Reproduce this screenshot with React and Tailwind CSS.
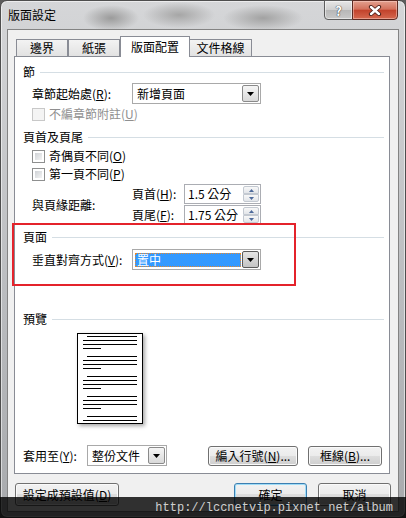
import React from "react";

function U({ c }) {
  return (
    <>
      (<span className="underline underline-offset-[1px]">{c}</span>)
    </>
  );
}

function Arrow({ dark }) {
  return (
    <div
      className={
        dark
          ? "w-[17px] flex items-center justify-center border border-[#5a5a5a] rounded-[2px] bg-[linear-gradient(#e4e4e4,#c4c4c4)]"
          : "w-[17px] flex items-center justify-center border border-[#8a8a8a] rounded-[2px] bg-[linear-gradient(#f5f5f5,#d9d9d9)]"
      }
    >
      <svg width="7" height="4" viewBox="0 0 7 4">
        <path d="M0 0h7L3.5 4z" fill="#000" />
      </svg>
    </div>
  );
}

function Select({ value, w, selected }) {
  return (
    <div className={`flex h-[21px] border border-[#a9a9a9] bg-white p-px ${w}`}>
      <div className="flex-1 flex items-center">
        {selected ? (
          <span className="flex-1 h-[14px] ml-px mr-px flex items-center pl-px bg-[#3399ff] text-white border border-dotted border-[#e8882c]">
            {value}
          </span>
        ) : (
          <span className="pl-[3px]">{value}</span>
        )}
      </div>
      <Arrow dark={selected} />
    </div>
  );
}

function SpinBtn({ up }) {
  return (
    <div
      className={
        up
          ? "h-[8px] flex items-center justify-center border border-[#c3c9d1] rounded-t-[2px] bg-[linear-gradient(#f8f8f8,#e2e5e9)]"
          : "h-[8px] flex items-center justify-center border border-[#c3c9d1] rounded-b-[2px] bg-[linear-gradient(#f8f8f8,#e2e5e9)]"
      }
    >
      <svg width="5" height="3" viewBox="0 0 5 3">
        {up ? <path d="M2.5 0L5 3H0z" fill="#4d6a9a" /> : <path d="M0 0h5L2.5 3z" fill="#4d6a9a" />}
      </svg>
    </div>
  );
}

function Spin({ value }) {
  return (
    <div className="flex h-[20px] w-[77px] border border-[#abadb3] bg-white items-center">
      <span className="flex-1 pl-[3px]">{value}</span>
      <div className="flex flex-col w-[16px] mr-px">
        <SpinBtn up />
        <SpinBtn />
      </div>
    </div>
  );
}

function Check({ label, disabled }) {
  return (
    <div className="flex items-center h-[14px] pl-[17px]">
      <div
        className={
          disabled
            ? "w-[13px] h-[13px] border border-[#c8c8c8] bg-[#f4f4f4]"
            : "w-[13px] h-[13px] border border-[#8e8f8f] bg-white p-[2px]"
        }
      >
        {!disabled && <div className="w-full h-full bg-[linear-gradient(135deg,#cfd2d6,#f4f4f4)]" />}
      </div>
      <span className={disabled ? "ml-[4px] text-[#8f8f8f]" : "ml-[4px]"}>{label}</span>
    </div>
  );
}

function Header({ children }) {
  return (
    <div className="flex items-center h-[16px] pl-[8px] pr-[5px]">
      <span>{children}</span>
      <div className="flex-1 h-px bg-[#d5dee4] ml-[5px]" />
    </div>
  );
}

function Btn({ children, w, def }) {
  return (
    <div
      className={
        def
          ? `flex items-center justify-center h-[23px] rounded-[3px] border border-[#3c7fb1] shadow-[inset_0_0_0_1px_#9fdcf7] bg-[linear-gradient(#f2f2f2_0%,#ebebeb_50%,#dddddd_50%,#cfcfcf_100%)] ${w}`
          : `flex items-center justify-center h-[23px] rounded-[3px] border border-[#707070] shadow-[inset_0_0_0_1px_#fafafa] bg-[linear-gradient(#f2f2f2_0%,#ebebeb_50%,#dddddd_50%,#cfcfcf_100%)] ${w}`
      }
    >
      {children}
    </div>
  );
}

function SmallBtn({ children, w }) {
  return (
    <div
      className={`flex items-center justify-center h-[20px] rounded-[3px] border border-[#707070] shadow-[inset_0_0_0_1px_#fafafa] bg-[linear-gradient(#f2f2f2_0%,#ebebeb_50%,#dddddd_50%,#cfcfcf_100%)] ${w}`}
    >
      {children}
    </div>
  );
}

function Preview() {
  const groups = [0, 20, 40, 60];
  return (
    <div className="w-[66px] h-[91px] border border-black bg-white shadow-[2px_2px_4px_rgba(0,0,0,0.35)]">
      <svg width="64" height="89" viewBox="0 0 64 89">
        {groups.map((g) => (
          <g key={g} fill="#000">
            <rect x="9" y={2 + g} width="50" height="1" />
            <rect x="5" y={6 + g} width="54" height="1" />
            <rect x="5" y={10 + g} width="54" height="1" />
            <rect x="5" y={14 + g} width="18" height="1" />
          </g>
        ))}
        <rect x="9" y="82" width="50" height="1" fill="#000" />
        <rect x="5" y="86" width="54" height="1" fill="#000" />
      </svg>
    </div>
  );
}

export default function App() {
  return (
    <div className="relative w-[406px] h-[518px] bg-[#5c5c5c] overflow-hidden font-['Noto_Sans_CJK_TC','Noto_Sans_CJK_SC',sans-serif] text-[12px] leading-[14px] text-black">
      <div className="flex flex-col w-[406px] h-[518px] rounded-[7px] border border-[#4e4e4e] shadow-[inset_0_0_0_1px_rgba(255,255,255,0.55)] bg-[radial-gradient(ellipse_28px_13px_at_110px_17px,#9b9b9b,transparent),radial-gradient(ellipse_36px_13px_at_178px_14px,#a6a6a6,transparent),radial-gradient(ellipse_40px_13px_at_262px_17px,#a2a2a2,transparent),linear-gradient(#d5d6d8,#b9bbbe_60%,#a8aaad)]">
        <div className="flex h-[28px] shrink-0">
          <span className="self-center pl-[7px] text-[12px]">版面設定</span>
          <div className="ml-auto mr-[7px] -mt-px flex h-[20px]">
            <div className="w-[29px] flex items-center justify-center border border-[#5d5d5d] rounded-bl-[4px] bg-[linear-gradient(#e6e6e6,#cfcfcf_50%,#b7b7b7_51%,#c9c9c9)] shadow-[inset_0_0_0_1px_rgba(255,255,255,0.5)]">
              <span className="text-white font-bold text-[13px] leading-none [text-shadow:0_0_1px_#333,0_0_1px_#333]">?</span>
            </div>
            <div className="w-[46px] -ml-px flex items-center justify-center border border-[#5c2a22] rounded-br-[4px] bg-[linear-gradient(#e3a08f,#d3715c_45%,#c2432c_52%,#d5684f)] shadow-[inset_0_0_0_1px_rgba(255,220,210,0.45)]">
              <svg width="14" height="11" viewBox="0 0 14 11">
                <path d="M3 2L11 9M11 2L3 9" stroke="#4a1e17" strokeWidth="4.2" strokeLinecap="round" />
                <path d="M3 2L11 9M11 2L3 9" stroke="#ffffff" strokeWidth="2.4" strokeLinecap="round" />
              </svg>
            </div>
          </div>
        </div>

        <div className="mx-[6px] h-[483px] border border-[#838383] bg-[#f0f0f0] pt-[6px] flex flex-col">
          <div className="flex items-end h-[20px] ml-[8px]">
            <div className="w-[52px] h-[17px] flex items-center justify-center border border-b-0 border-[#898c95] bg-[linear-gradient(#f3f3f3,#e2e2e2)]">邊界</div>
            <div className="w-[52px] h-[17px] flex items-center justify-center border border-b-0 border-[#898c95] bg-[linear-gradient(#f3f3f3,#e2e2e2)]">紙張</div>
            <div className="relative z-10 w-[70px] h-[21px] -mb-px flex items-center justify-center border border-b-0 border-[#898c95] bg-white">版面配置</div>
            <div className="w-[62px] h-[17px] flex items-center justify-center border border-b-0 border-l-0 border-[#898c95] bg-[linear-gradient(#f3f3f3,#e2e2e2)]">文件格線</div>
          </div>

          <div className="relative ml-[6px] w-[376px] h-[418px] border border-[#898c95] bg-white pt-[7px]">
            <Header>節</Header>
            <div className="flex items-center mt-[3px] pl-[17px]">
              <span className="w-[100px]">
                章節起始處<U c="R" />:
              </span>
              <Select value="新增頁面" w="w-[129px]" />
            </div>
            <div className="mt-[3px]">
              <Check
                disabled
                label={
                  <>
                    不編章節附註<U c="U" />
                  </>
                }
              />
            </div>
            <div className="mt-[8px]">
              <Header>頁首及頁尾</Header>
            </div>
            <div className="mt-[4px]">
              <Check
                label={
                  <>
                    奇偶頁不同<U c="O" />
                  </>
                }
              />
            </div>
            <div className="mt-[4px]">
              <Check
                label={
                  <>
                    第一頁不同<U c="P" />
                  </>
                }
              />
            </div>
            <div className="flex mt-[3px] pl-[17px]">
              <div className="w-[100px] flex items-center pt-[1px]">與頁緣距離:</div>
              <div className="flex flex-col gap-px">
                <div className="flex items-center h-[20px]">
                  <span className="w-[52px]">
                    頁首<U c="H" />:
                  </span>
                  <Spin value="1.5 公分" />
                </div>
                <div className="flex items-center h-[20px]">
                  <span className="w-[52px]">
                    頁尾<U c="F" />:
                  </span>
                  <Spin value="1.75 公分" />
                </div>
              </div>
            </div>
            <div className="mt-[4px]">
              <Header>頁面</Header>
            </div>
            <div className="flex items-center mt-[4px] pl-[17px]">
              <span className="w-[100px]">
                垂直對齊方式<U c="V" />:
              </span>
              <Select value="置中" w="w-[129px]" selected />
            </div>
            <div className="mt-[41px]">
              <Header>預覽</Header>
            </div>
            <div className="mt-[6px] ml-[62px]">
              <Preview />
            </div>
            <div className="flex items-center mt-[21px] pl-[8px]">
              <span className="w-[64px]">
                套用至<U c="Y" />:
              </span>
              <Select value="整份文件" w="w-[80px]" />
              <div className="ml-[41px]">
                <SmallBtn w="w-[90px]">
                  編入行號<U c="N" />...
                </SmallBtn>
              </div>
              <div className="ml-[10px]">
                <SmallBtn w="w-[74px]">
                  框線<U c="B" />...
                </SmallBtn>
              </div>
            </div>

            <div className="absolute left-[-3px] top-[166px] w-[284px] h-[63px] border-2 border-[#e4232b] pointer-events-none" />
          </div>

          <div className="flex mt-[9px] px-[7px]">
            <Btn w="w-[104px]">
              設定成預設值<U c="D" />
            </Btn>
            <div className="ml-auto">
              <Btn w="w-[73px]" def>
                確定
              </Btn>
            </div>
            <div className="ml-[11px]">
              <Btn w="w-[73px]">取消</Btn>
            </div>
          </div>
        </div>
      </div>

      <div className="absolute left-0 right-0 bottom-0 h-[21px] bg-black/80 flex items-center justify-end pr-[13px]">
        <span className="font-['Liberation_Mono',monospace] text-[12px] leading-none text-[#cfcfcf]">
          http://lccnetvip.pixnet.net/album
        </span>
      </div>
    </div>
  );
}
